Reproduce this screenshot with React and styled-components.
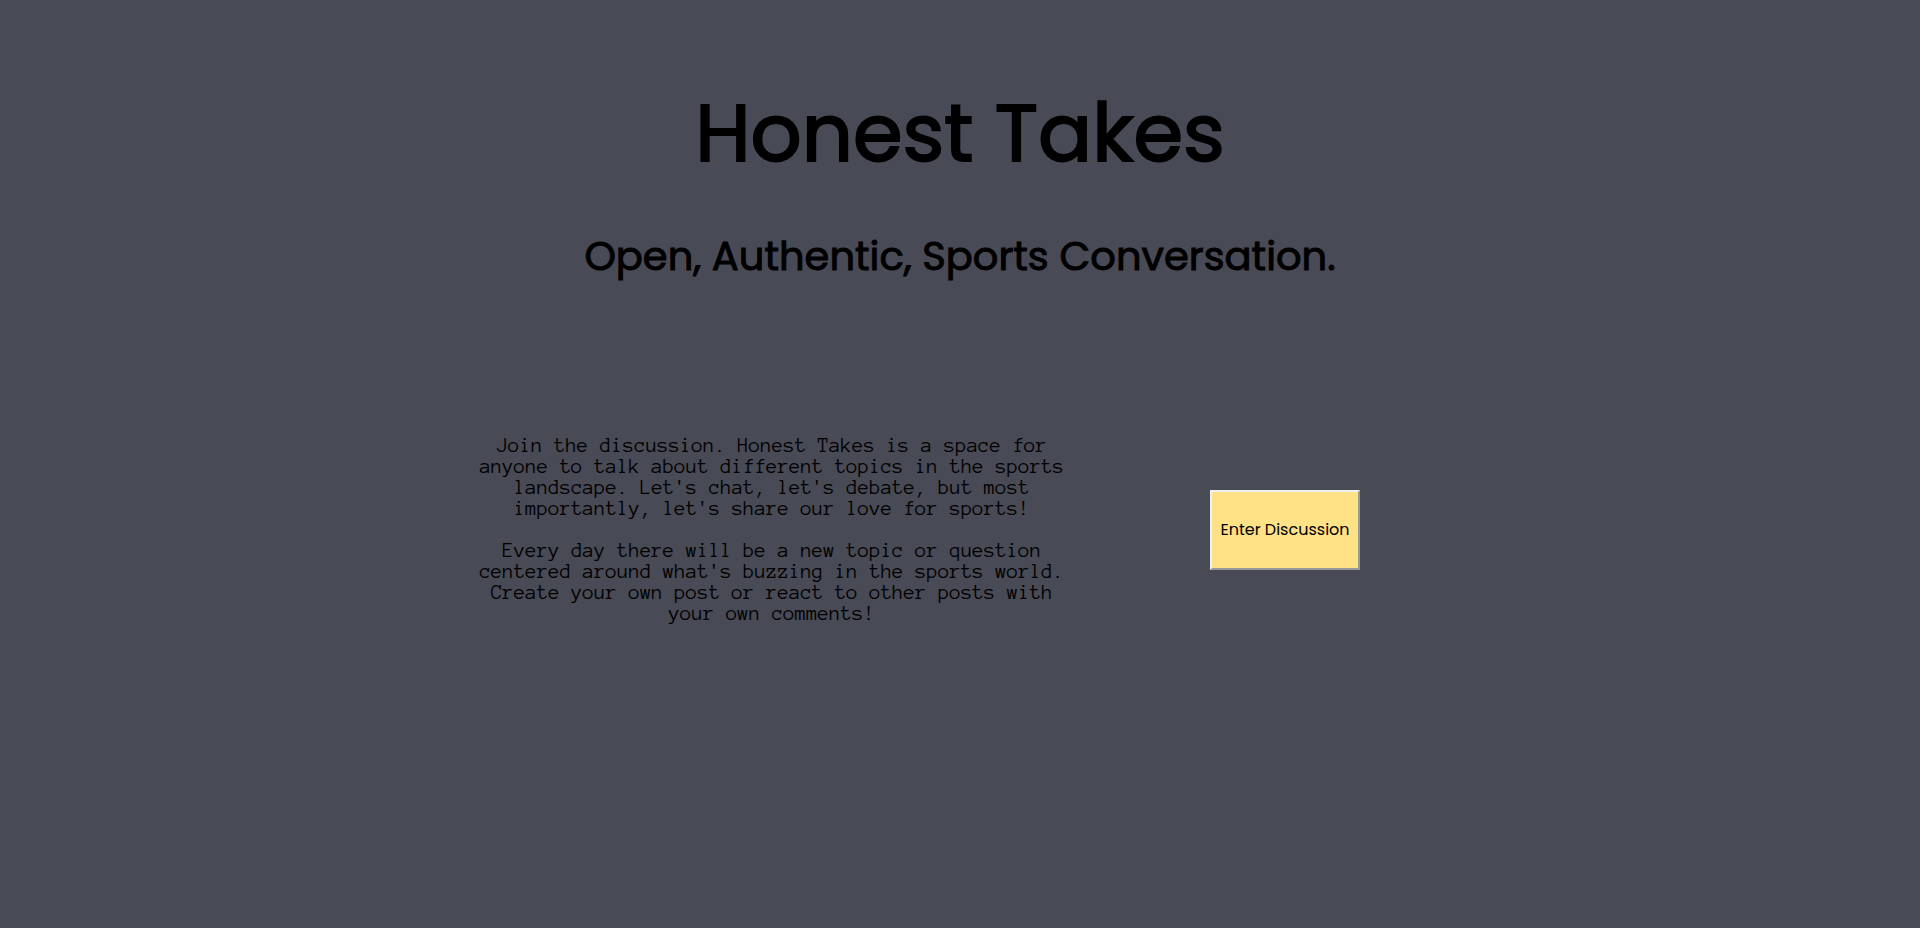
import React from "react";
import styled, { createGlobalStyle } from "styled-components";

const GlobalStyle = createGlobalStyle`
  body {
    margin: 0;
    background: #484a55;
    color: #000;
    font-family: Poppins, Inter, sans-serif;
  }
`;

const Page = styled.main`
  display: flex;
  flex-direction: column;
  align-items: center;
  min-height: 100vh;
  box-sizing: border-box;
  padding: 73px 24px;
  text-align: center;
`;

const Title = styled.h1`
  margin: 0;
  font-size: 80px;
  font-weight: 400;
  line-height: 120px;
  -webkit-text-stroke: 2px;
`;

const Tagline = styled.h2`
  margin: 33px 0 0;
  font-size: 40px;
  font-weight: 400;
  line-height: 60px;
  -webkit-text-stroke: 1px;
`;

const Welcome = styled.section`
  display: flex;
  flex-wrap: wrap;
  align-items: center;
  justify-content: center;
  gap: 32px 138px;
  margin-top: 149px;
  padding-right: 88px;
`;

const Intro = styled.div`
  display: grid;
  gap: 21px;
  max-width: 600px;
`;

const Paragraph = styled.p`
  margin: 0;
  font-family: "Anonymous Pro", "Liberation Mono", monospace;
  font-size: 21px;
  line-height: 21px;
`;

const EnterButton = styled.button`
  width: 150px;
  height: 80px;
  padding: 0;
  border: 2px solid;
  border-color: #f0f0f0 #999 #999 #f0f0f0;
  background: #ffe186;
  color: #000;
  font-family: inherit;
  font-size: 16px;
  font-weight: 400;
  white-space: nowrap;
`;

export default function App() {
  return (
    <>
      <GlobalStyle />
      <Page>
        <Title>Honest Takes</Title>
        <Tagline>Open, Authentic, Sports Conversation.</Tagline>
        <Welcome>
          <Intro>
            <Paragraph>
              Join the discussion. Honest Takes is a space for anyone to talk
              about different topics in the sports landscape. Let's chat, let's
              debate, but most importantly, let's share our love for sports!
            </Paragraph>
            <Paragraph>
              Every day there will be a new topic or question centered around
              what's buzzing in the sports world. Create your own post or react
              to other posts with your own comments!
            </Paragraph>
          </Intro>
          <EnterButton type="button">Enter Discussion</EnterButton>
        </Welcome>
      </Page>
    </>
  );
}
